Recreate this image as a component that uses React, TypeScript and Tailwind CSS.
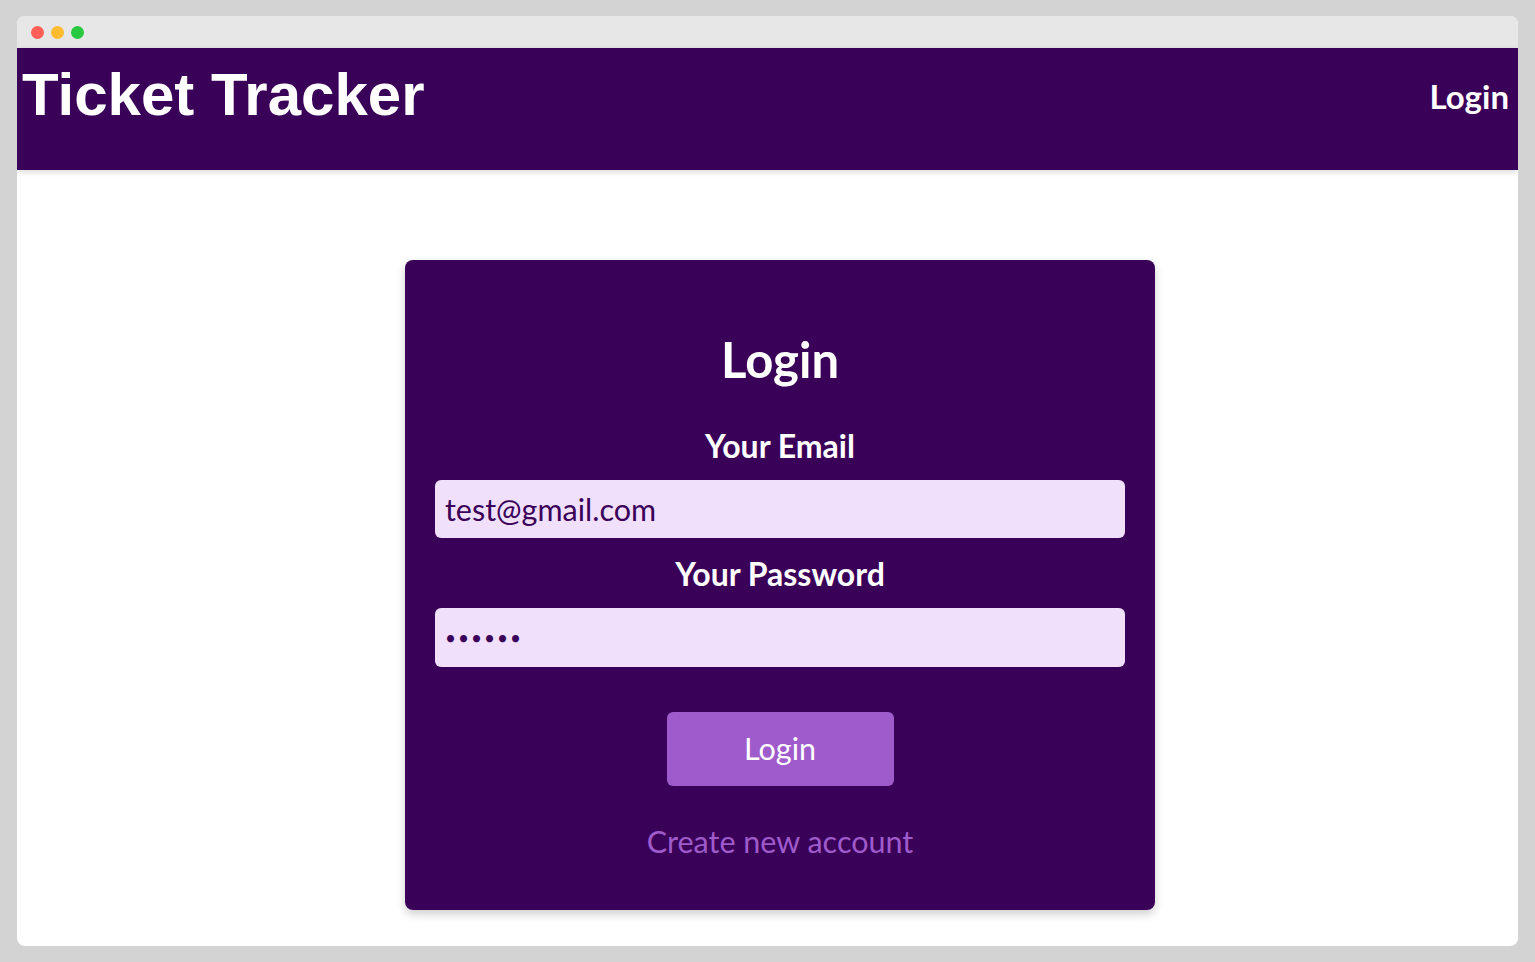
export default function App() {
  const body = { fontFamily: '"Lato", "Open Sans", sans-serif' };
  return (
    <div className="min-h-screen bg-[#d3d3d3] px-[17px] pt-[16px] pb-[16px]">
      <div className="flex h-[930px] flex-col overflow-hidden rounded-[8px] bg-white">
        {/* title bar */}
        <div className="flex h-[32px] shrink-0 items-center gap-[7px] bg-[#e7e7e7] pl-[14px] pt-[1px]">
          <span className="h-[13px] w-[13px] rounded-full bg-[#ff5f57]" />
          <span className="h-[13px] w-[13px] rounded-full bg-[#febc2e]" />
          <span className="h-[13px] w-[13px] rounded-full bg-[#28c840]" />
        </div>

        {/* header */}
        <header className="flex h-[122px] shrink-0 items-start justify-between bg-[#3a0159] pl-[5px] pr-[9px] shadow-[0_2px_6px_rgba(0,0,0,0.15)]">
          <h1
            className="mt-[12px] text-[60px] leading-[70px] font-bold text-white"
            style={{ fontFamily: '"Liberation Sans", Arial, sans-serif' }}
          >
            Ticket Tracker
          </h1>
          <a href="#" className="mt-[29px] text-[33px] leading-[38px] font-bold text-white" style={body}>
            Login
          </a>
        </header>

        {/* main */}
        <main className="flex flex-1 justify-center pt-[90px] pl-[25px]" style={body}>
          <form className="flex h-[650px] w-[750px] flex-col items-center rounded-[8px] bg-[#3a0159] px-[30px] pt-[68px] shadow-[0_4px_10px_rgba(0,0,0,0.2)]">
            <h2 className="text-[49px] leading-[62px] font-bold text-white">Login</h2>
            <label className="mt-[36px] text-[32px] leading-[40px] font-bold text-white">Your Email</label>
            <input
              className="mt-[14px] h-[58px] w-full rounded-[6px] bg-[#f0e0fb] px-[10px] text-[30.5px] text-[#3a0159] outline-none"
              defaultValue="test@gmail.com"
            />
            <label className="mt-[16px] text-[32px] leading-[40px] font-bold text-white">Your Password</label>
            <input
              type="password"
              className="mt-[14px] h-[59px] w-full rounded-[6px] bg-[#f0e0fb] px-[10px] text-[19px] tracking-[2px] text-[#3a0159] outline-none"
              defaultValue="123456"
            />
            <button
              type="button"
              className="mt-[45px] h-[74px] w-[227px] rounded-[6px] bg-[#9f5bcb] text-[30.5px] text-white"
            >
              Login
            </button>
            <a href="#" className="mt-[37px] text-[30.5px] leading-[36px] text-[#9f5bcb]">
              Create new account
            </a>
          </form>
        </main>
      </div>
    </div>
  );
}
